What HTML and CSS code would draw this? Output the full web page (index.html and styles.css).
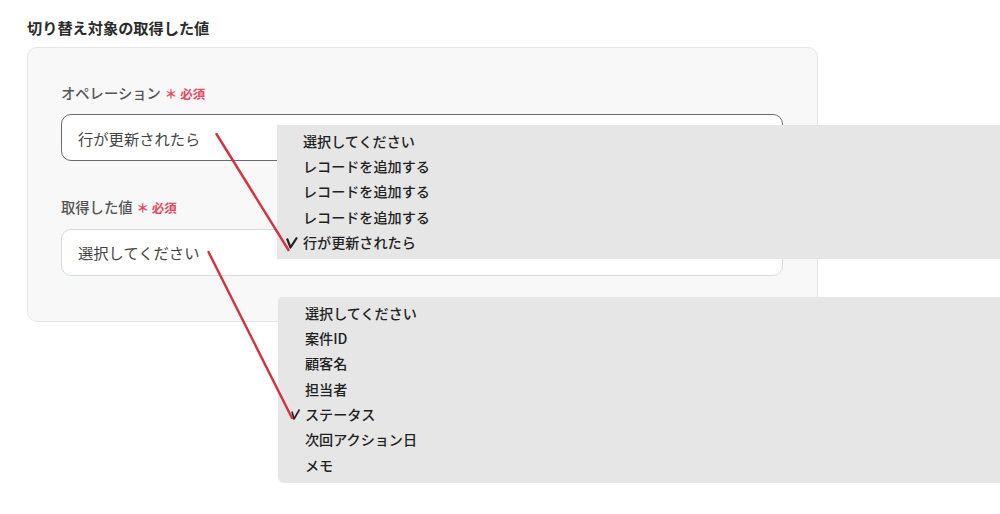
FILE: index.html
```html
<!DOCTYPE html>
<html lang="ja">
<head>
<meta charset="utf-8">
<link rel="stylesheet" href="styles.css">
</head>
<body>
<div class="page">
  <h2 class="title">切り替え対象の取得した値</h2>
  <div class="card">
    <div class="field">
      <div class="label">オペレーション<span class="req">＊ 必須</span></div>
      <div class="input input-focus">行が更新されたら</div>
    </div>
    <div class="field">
      <div class="label">取得した値<span class="req">＊ 必須</span></div>
      <div class="input">選択してください</div>
    </div>
  </div>

  <ul class="menu menu-op">
    <li class="item">選択してください</li>
    <li class="item">レコードを追加する</li>
    <li class="item">レコードを追加する</li>
    <li class="item">レコードを追加する</li>
    <li class="item checked"><svg class="check" width="12" height="12" viewBox="0 0 12 12"><polyline points="1,1.5 4.5,10.5 11,0.5" fill="none" stroke="#222" stroke-width="2.2" stroke-linejoin="round"/></svg>行が更新されたら</li>
  </ul>

  <ul class="menu menu-val">
    <li class="item">選択してください</li>
    <li class="item">案件ID</li>
    <li class="item">顧客名</li>
    <li class="item">担当者</li>
    <li class="item checked"><svg class="check" width="12" height="12" viewBox="0 0 12 12"><polyline points="2,2.5 4,10 9.5,0.5" fill="none" stroke="#222" stroke-width="1.6" stroke-linejoin="round"/></svg>ステータス</li>
    <li class="item">次回アクション日</li>
    <li class="item">メモ</li>
  </ul>

  <svg class="arrows" width="1000" height="514" viewBox="0 0 1000 514">
    <line x1="216.5" y1="134" x2="288.5" y2="250" stroke="#d7303e" stroke-width="2.4" stroke-linecap="round"/>
    <line x1="208.5" y1="252" x2="292" y2="418" stroke="#d7303e" stroke-width="2.4" stroke-linecap="round"/>
  </svg>
</div>
</body>
</html>
```

FILE: styles.css
```css
html, body {
  margin: 0;
  padding: 0;
  background: #ffffff;
  overflow: hidden;
}

body {
  font-family: "Noto Sans CJK JP", "Noto Sans", sans-serif;
  color: #333;
}

.page {
  position: relative;
  width: 1000px;
  height: 514px;
  padding: 17px 0 0 27px;
  box-sizing: border-box;
}

.title {
  margin: 0;
  font-size: 15.2px;
  line-height: 20px;
  font-weight: 700;
  color: #2b2b2b;
}

.card {
  margin-top: 10px;
  width: 791px;
  box-sizing: border-box;
  background: #f8f8f8;
  border: 1px solid #e6e6e6;
  border-radius: 10px;
  padding: 34.5px 34px 45px 33px;
  display: flex;
  flex-direction: column;
  gap: 36px;
}

.field {
  display: flex;
  flex-direction: column;
  gap: 10.5px;
}

.label {
  font-size: 14.3px;
  line-height: 20px;
  color: #555;
  font-weight: 500;
}

.req {
  color: #e8455d;
  font-size: 12.5px;
  font-weight: 700;
  margin-left: 4px;
}

.input {
  height: 47px;
  box-sizing: border-box;
  background: #fff;
  border: 1px solid #d6dce4;
  border-radius: 10px;
  padding: 0 16px;
  display: flex;
  align-items: center;
  font-size: 15.3px;
  color: #444;
}

.input-focus {
  border-color: #6b6b6b;
}

.menu {
  position: absolute;
  left: 277px;
  width: 740px;
  margin: 0;
  padding: 3.5px 0 4px;
  list-style: none;
  background: #e6e6e6;
}

.menu-op {
  top: 125px;
}

.menu-val {
  top: 297px;
  left: 278px;
  border-radius: 4px 0 0 6px;
  padding-bottom: 4.5px;
}

.item {
  position: relative;
  padding-left: 26px;
  font-size: 14.1px;
  line-height: 25.4px;
  height: 25.4px;
  color: #222;
  font-weight: 500;
}

.menu-val .item {
  padding-left: 27px;
}

.check {
  position: absolute;
  left: 9px;
  top: 7px;
}

.menu-val .check {
  left: 12px;
}

.arrows {
  position: absolute;
  left: 0;
  top: 0;
  pointer-events: none;
}
```
